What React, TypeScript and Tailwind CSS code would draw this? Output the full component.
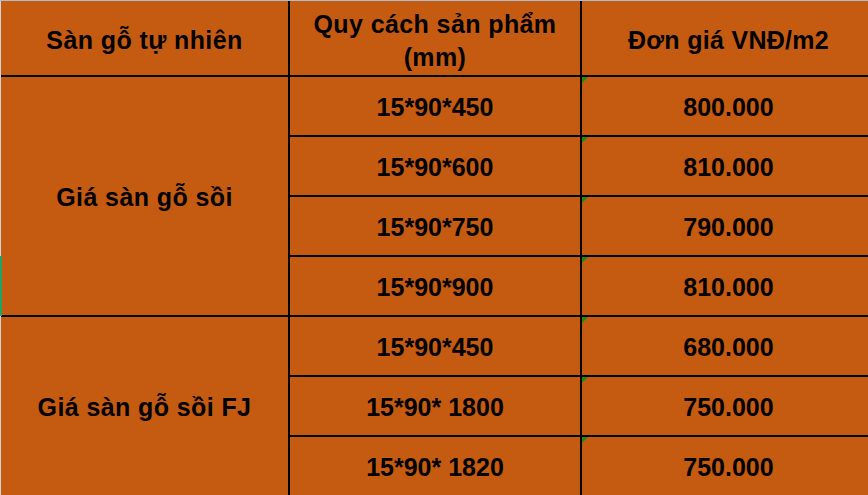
import React from "react";

const Tri = () => (
  <div className="absolute left-0 top-0 w-0 h-0 border-t-[6px] border-t-[#1a8a1a] border-r-[6px] border-r-transparent" />
);

const Cell = ({ children, cls = "", tri = false }: { children: React.ReactNode; cls?: string; tri?: boolean }) => (
  <div className={`relative bg-[#c55a11] flex items-center justify-center text-center ${cls}`}>
    {tri && <Tri />}
    {children}
  </div>
);

const rowCls = ["row-start-2", "row-start-3", "row-start-4", "row-start-5", "row-start-6", "row-start-7", "row-start-8"];

export default function App() {
  const rows = [
    ["15*90*450", "800.000"],
    ["15*90*600", "810.000"],
    ["15*90*750", "790.000"],
    ["15*90*900", "810.000"],
    ["15*90*450", "680.000"],
    ["15*90* 1800", "750.000"],
    ["15*90* 1820", "750.000"],
  ];
  return (
    <div
      className="relative w-[868px] h-[495px] overflow-hidden bg-white flex flex-col text-black font-bold text-[25px] leading-none"
      style={{ fontFamily: '"Liberation Sans", Arial, sans-serif' }}
    >
      <div className="h-px shrink-0 bg-[#b4bccb]" />
      <div className="flex flex-1 min-h-0">
        <div className="w-px shrink-0 bg-[#d0d4da]" />
        <div className="grid grid-cols-[287px_290px_293px] grid-rows-[74px_repeat(7,58px)] gap-[2px] bg-black shrink-0 self-start">
          <Cell cls="col-start-1 row-start-1 pt-[4px] tracking-[0.4px]">Sàn gỗ tự nhiên</Cell>
          <Cell cls="col-start-2 row-start-1 leading-[33px] pt-[5px] tracking-[0.4px]">
            <div>
              Quy cách sản phẩm
              <br />
              (mm)
            </div>
          </Cell>
          <Cell cls="col-start-3 row-start-1 pt-[4px] tracking-[0.3px]">Đơn giá VNĐ/m2</Cell>

          <Cell cls="col-start-1 row-start-2 row-span-4 pt-[3px] tracking-[0.4px]">Giá sàn gỗ sồi</Cell>
          <Cell cls="col-start-1 row-start-6 row-span-3 pt-[3px] tracking-[0.4px]">Giá sàn gỗ sồi FJ</Cell>

          {rows.map(([a, b], i) => (
            <React.Fragment key={i}>
              <Cell cls={`col-start-2 pt-[3px] ${rowCls[i]}`}>{a}</Cell>
              <Cell cls={`col-start-3 pt-[3px] ${rowCls[i]}`} tri>
                {b}
              </Cell>
            </React.Fragment>
          ))}
        </div>
      </div>
      <div className="absolute left-0 top-[256px] w-[2px] h-[60px] bg-[#21a366]" />
    </div>
  );
}
